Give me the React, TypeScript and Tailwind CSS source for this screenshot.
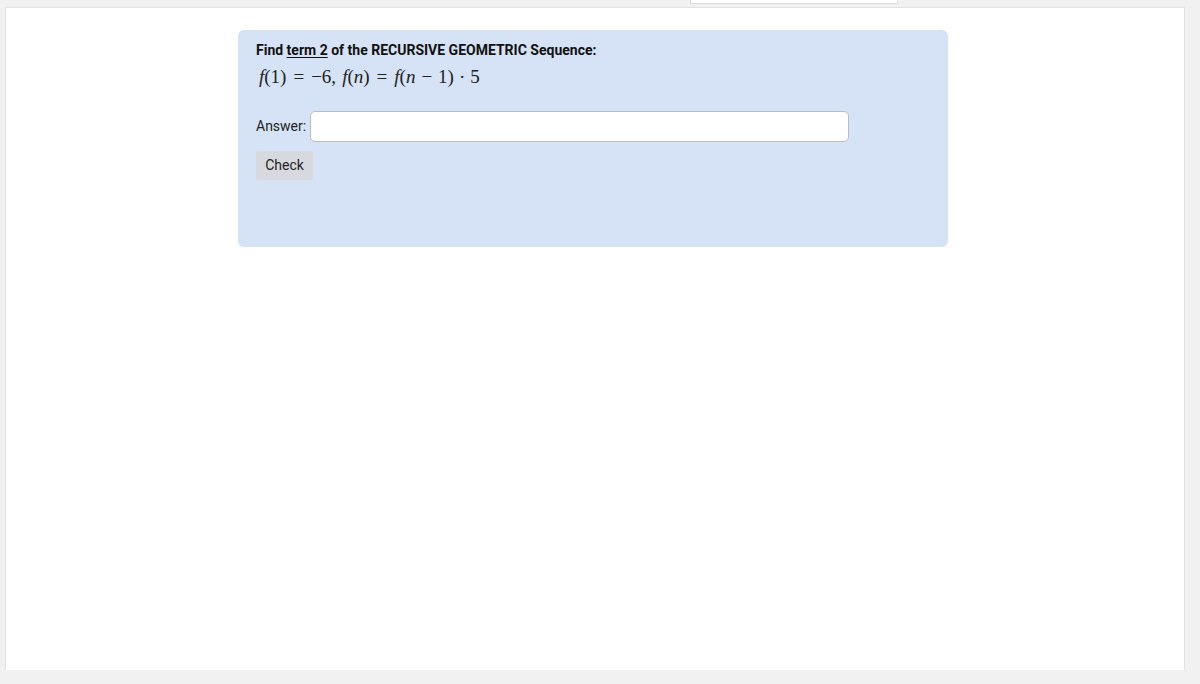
import React from "react";

export default function App() {
  const mathFont = { fontFamily: '"Liberation Serif", "DejaVu Serif", serif' };
  return (
    <div className="w-[1200px] h-[684px] bg-[#f1f1f1] relative overflow-hidden" style={{ fontFamily: 'Roboto, "Liberation Sans", sans-serif' }}>
      <div className="absolute left-[690px] top-0 w-[208px] h-[4px] bg-white border border-t-0 border-[#dcdcdc]" />
      <div className="pt-[7px] pl-[5px] pr-[15px] h-[670px]">
        <div className="h-full bg-white border-l border-t border-r border-[#e2e2e2] pt-[22px] pl-[232px]">
          <div className="w-[710px] h-[217px] bg-[#d6e2f5] rounded-[6px] pt-[11px] pl-[18px]">
            <div className="text-[14px] font-bold text-[#111] leading-[18px]">
              Find <span className="underline underline-offset-2">term 2</span> of the RECURSIVE GEOMETRIC Sequence:
            </div>
            <div className="mt-[8px] ml-[3px] text-[19px] text-[#222] leading-[20px] whitespace-nowrap" style={mathFont}>
              <i>f</i>(1)<span className="mx-[7px]">=</span>−6,<span className="ml-[6px]"></span><i>f</i>(<i>n</i>)<span className="mx-[7px]">=</span><i>f</i>(<i>n</i><span className="mx-[6px]">−</span>1)<span className="mx-[5px]">·</span>5
            </div>
            <div className="mt-[24px] flex items-center">
              <span className="text-[14px] text-[#222] mr-[4px]">Answer:</span>
              <div className="w-[539px] h-[31px] bg-white border border-[#b9bcc4] rounded-[5px]" />
            </div>
            <div className="mt-[9px] w-[57px] h-[29px] bg-[#d8d9de] rounded-[2px] flex items-center justify-center text-[14px] text-[#222]">
              Check
            </div>
          </div>
        </div>
      </div>
    </div>
  );
}
